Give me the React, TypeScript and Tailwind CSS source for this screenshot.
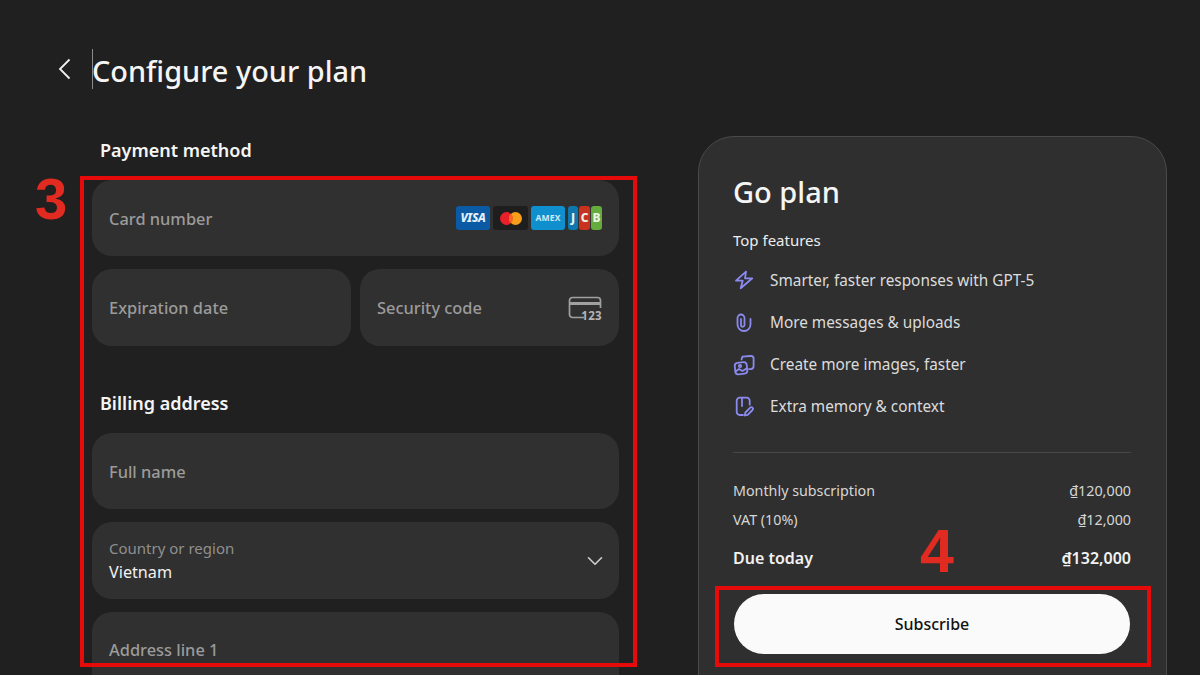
import { ChevronDown } from 'lucide-react';
import type { ReactNode } from 'react';

const font = { fontFamily: '"Noto Sans", "Open Sans", sans-serif' };

function Field({ label, children, className = 'h-[77px] pt-[1px]' }: { label: string; children?: ReactNode; className?: string }) {
  return (
    <div className={`flex items-center justify-between rounded-[20px] bg-[#303030] pl-[17px] pr-[17px] ${className}`}>
      <span className="text-[16.4px] font-medium text-[#9b9b9b]">{label}</span>
      {children}
    </div>
  );
}

function CardLogos() {
  return (
    <div className="flex items-center gap-[3px]">
      <div className="flex h-[24px] w-[34px] items-center justify-center rounded-[3px] bg-[#0b5aa6] text-[12px] font-extrabold italic tracking-[-0.3px] text-[#e8f0f8]">VISA</div>
      <div className="flex h-[24px] w-[35px] items-center justify-center rounded-[3px] bg-[#1e1e1e]">
        <svg width="24" height="15" viewBox="0 0 24 15">
          <circle cx="7.5" cy="7.5" r="6.5" fill="#e8202a" />
          <circle cx="16.5" cy="7.5" r="6.5" fill="#f79e1b" />
          <path d="M12 2.8a6.5 6.5 0 0 1 0 9.4 6.5 6.5 0 0 1 0-9.4z" fill="#f26522" />
        </svg>
      </div>
      <div className="flex h-[24px] w-[34px] items-center justify-center rounded-[3px] bg-[#0f8fce] text-[8.5px] font-bold tracking-[0.2px] text-[#cfe9f7]">AMEX</div>
      <div className="flex h-[24px] w-[34px] justify-between text-[12px] font-extrabold leading-[24px] text-[#eaf3ea]">
        <span className="w-[10px] rounded-[3px] bg-[#0f76ae] text-center">J</span>
        <span className="w-[11px] rounded-[3px] bg-[#c9321f] text-center">C</span>
        <span className="w-[11px] rounded-[3px] bg-[#64ac3c] text-center">B</span>
      </div>
    </div>
  );
}

function SecurityIcon() {
  return (
    <div className="relative h-[24px] w-[34px]">
      <svg width="34" height="24" viewBox="0 0 34 24" fill="none" stroke="#a0a0a0" strokeWidth="1.7">
        <path d="M16 21.5H4.5a3 3 0 0 1-3-3V4.5a3 3 0 0 1 3-3h25a3 3 0 0 1 3 3V12" />
        <path d="M1.5 7.5h31" strokeWidth="3" />
      </svg>
      <span className="absolute bottom-[-3px] right-0 text-[11.5px] font-bold leading-[14px] tracking-[0.3px] text-[#b5b5b5]">123</span>
    </div>
  );
}

const features: { text: string; icon: ReactNode }[] = [
  {
    text: 'Smarter, faster responses with GPT-5',
    icon: <path d="M14 2.7 4 11.7h6.7l-2 7.6 11.6-10H13z" />,
  },
  {
    text: 'More messages & uploads',
    icon: <path d="M18.5 8v5.5a6.5 6.5 0 0 1-13 0V7a3.5 3.5 0 0 1 7 0v7a1.75 1.75 0 0 1-3.5 0V8" />,
  },
  {
    text: 'Create more images, faster',
    icon: (
      <>
        <rect x="3" y="9.5" width="12" height="11.5" rx="3" transform="rotate(-6 9 15)" />
        <path d="M9.5 6.5 10.5 3.6 18 3h1a2.6 2.6 0 0 1 2.6 2.6v7.5a3 3 0 0 1-3 3H17" />
        <circle cx="8" cy="13" r="1.2" />
        <path d="m3.5 18.5 3.5-2.5 3.5 2 4-2.5" />
      </>
    ),
  },
  {
    text: 'Extra memory & context',
    icon: (
      <>
        <path d="M11 20H7.7a3 3 0 0 1-3-3V5.7a3 3 0 0 1 3-3h7a3 3 0 0 1 3 3v4" />
        <path d="M10 3v8" />
        <path d="m12.8 20.5.6-3 4.8-4.8a1.6 1.6 0 0 1 2.3 2.3l-4.8 4.8z" />
      </>
    ),
  },
];

function PriceRow({ label, value, bold = false }: { label: string; value: string; bold?: boolean }) {
  return (
    <div className={`flex justify-between ${bold ? 'text-[16px] font-semibold text-[#f2f2f2]' : 'text-[14.3px] text-[#d6d6d6]'}`}>
      <span>{label}</span>
      <span>{value}</span>
    </div>
  );
}

export default function App() {
  return (
    <div className="relative h-[675px] w-[1200px] overflow-hidden bg-[#202020] text-white" style={font}>
      {/* Header */}
      <div className="flex h-[136px] items-start pl-[56px] pt-[49px]">
        <svg width="16" height="22" viewBox="0 0 16 22" fill="none" stroke="#f0f0f0" strokeWidth="1.8" className="mt-[9px]">
          <path d="M13.5 1.5 4 11l9.5 9.5" />
        </svg>
        <div className="ml-[20px] h-[40px] w-px bg-[#8a8a8a]" />
        <h1 className="-ml-px text-[28.9px] font-medium leading-[44px] text-[#f5f5f5]">Configure your plan</h1>
      </div>

      <div className="flex items-start pl-[92px]">
        {/* Form */}
        <div className="flex w-[527px] shrink-0 flex-col">
          <h2 className="mb-[16px] h-[28px] pl-2 text-[18px] font-semibold leading-[28px] text-[#f5f5f5]">Payment method</h2>
          <Field label="Card number" className="h-[76px] pt-[2px]">
            <div className="-mt-[2px]">
              <CardLogos />
            </div>
          </Field>
          <div className="mt-[13px] grid grid-cols-2 gap-[9px]">
            <Field label="Expiration date" />
            <Field label="Security code">
              <SecurityIcon />
            </Field>
          </div>
          <h2 className="mb-[16px] mt-[43px] h-[28px] pl-2 text-[18px] font-semibold leading-[28px] text-[#f5f5f5]">Billing address</h2>
          <Field label="Full name" className="h-[76px] pt-[2px]" />
          <div className="mt-[13px] flex h-[77px] items-center justify-between rounded-[20px] bg-[#303030] pl-[17px] pr-[11px]">
            <div className="flex flex-col pb-[1px]">
              <span className="text-[15px] leading-[23px] text-[#8f8f8f]">Country or region</span>
              <span className="text-[16.2px] leading-[24px] text-[#f2f2f2]">Vietnam</span>
            </div>
            <ChevronDown className="h-[26px] w-[26px] text-[#cfcfcf]" strokeWidth={1.5} />
          </div>
          <div className="mt-[13px] h-[77px] rounded-t-[20px] bg-[#303030] pl-[17px] pt-[26px] text-[16.4px] font-medium text-[#9b9b9b]">Address line 1</div>
        </div>

        {/* Summary card */}
        <div className="ml-[79px] h-[620px] w-[469px] shrink-0 rounded-[36px] border border-[#4a4a4a] bg-[#2f2f2f] pl-[34px] pr-[35px] pt-[33px]">
          <h2 className="text-[29px] font-medium leading-[44px] text-[#f5f5f5]">Go plan</h2>
          <p className="mt-[14px] text-[15px] leading-[24px] text-[#ececec]">Top features</p>
          <ul className="mt-[13px] flex flex-col gap-[10px]">
            {features.map(f => (
              <li key={f.text} className="flex h-[32px] items-center gap-[14px] text-[15.35px] text-[#dcdcdc]">
                <svg width="24" height="24" viewBox="0 0 24 24" fill="none" stroke="#8a8af0" strokeWidth="1.8" strokeLinecap="round" strokeLinejoin="round" className="-ml-[1px]">
                  {f.icon}
                </svg>
                {f.text}
              </li>
            ))}
          </ul>
          <div className="mt-[29px] h-px bg-[#484848]" />
          <div className="mt-[27px] flex flex-col">
            <PriceRow label="Monthly subscription" value="₫120,000" />
            <div className="mt-[8px]">
              <PriceRow label="VAT (10%)" value="₫12,000" />
            </div>
            <div className="mt-[15px]">
              <PriceRow label="Due today" value="₫132,000" bold />
            </div>
          </div>
          <button className="ml-px mt-[24px] h-[60px] w-[396px] rounded-full bg-[#fafafa] text-[16px] font-medium text-[#111111]">Subscribe</button>
        </div>
      </div>

      {/* Annotations */}
      <div className="absolute left-[80px] top-[176px] h-[491px] w-[557px] border-[4px] border-[#e60a0a]" />
      <div className="absolute left-[715px] top-[586px] h-[81px] w-[436px] border-[4px] border-[#e60a0a]" />
      <span className="absolute left-[35px] top-[165px] text-[58px] font-black leading-[68px] text-[#e12a20]" style={{ fontFamily: '"Liberation Sans", sans-serif' }}>3</span>
      <span className="absolute left-[920px] top-[518px] text-[61px] font-black leading-[66px] text-[#e12a20]" style={{ fontFamily: '"Liberation Sans", sans-serif' }}>4</span>
    </div>
  );
}
